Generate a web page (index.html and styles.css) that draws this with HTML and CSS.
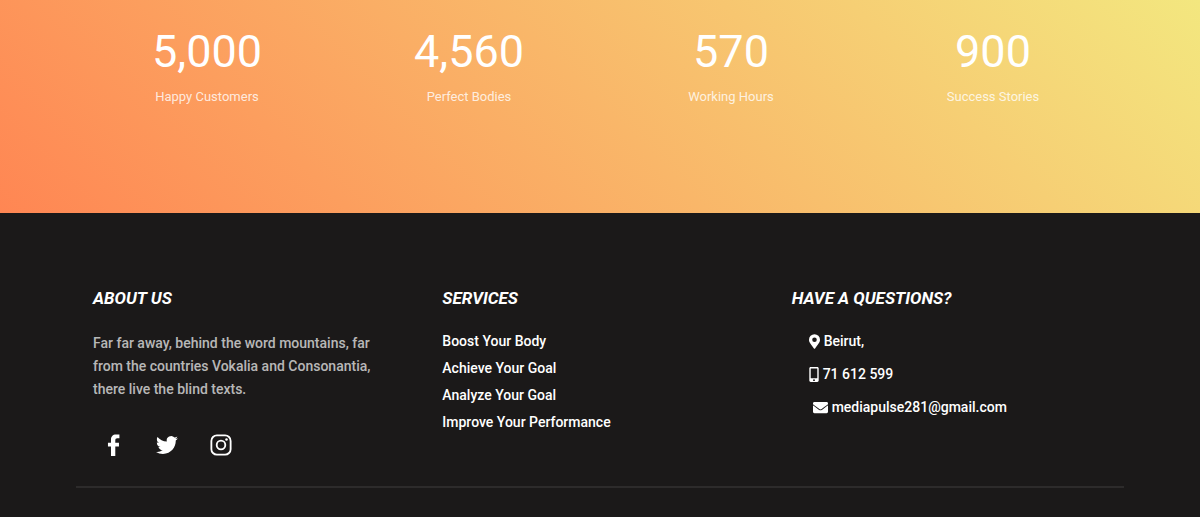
FILE: index.html
```html
<!DOCTYPE html>
<html lang="en">
<head>
    <meta charset="UTF-8">
    <meta name="viewport" content="width=device-width, initial-scale=1.0">
    <title>Gym</title>
    <link rel="stylesheet" href="styles.css">
</head>
<body>
    <section class="counter-section">
        <div class="container counters">
            <div class="counter">
                <strong class="number">5,000</strong>
                <span class="label">Happy Customers</span>
            </div>
            <div class="counter">
                <strong class="number">4,560</strong>
                <span class="label">Perfect Bodies</span>
            </div>
            <div class="counter">
                <strong class="number">570</strong>
                <span class="label">Working Hours</span>
            </div>
            <div class="counter">
                <strong class="number">900</strong>
                <span class="label">Success Stories</span>
            </div>
        </div>
    </section>

    <footer class="footer">
        <div class="container footer-row">
            <div class="footer-col">
                <h2>About Us</h2>
                <p class="about">Far far away, behind the word mountains, far from the countries Vokalia and Consonantia, there live the blind texts.</p>
                <ul class="social">
                    <li><a href="#" aria-label="Facebook">
                        <svg viewBox="0 0 24 24"><path d="M14.500 24V13.500h4V9.500h-4V7c0-1.600.7-2.400 2.200-2.400H19V.5h-3.600C11.600.5 9.800 2.700 9.800 6.200v3.300H6.500v4h3.300V24z"/></svg>
                    </a></li>
                    <li><a href="#" aria-label="Twitter">
                        <svg viewBox="0 0 24 24"><path d="M23.950 4.570a10 10 0 0 1-2.820.770 4.960 4.960 0 0 0 2.160-2.720c-.950.550-2 .960-3.130 1.180a4.920 4.920 0 0 0-8.380 4.480C7.690 8.090 4.070 6.130 1.640 3.160a4.820 4.820 0 0 0-.670 2.480c0 1.710.870 3.210 2.190 4.100a4.900 4.900 0 0 1-2.230-.620v.060a4.920 4.920 0 0 0 3.950 4.830 5 5 0 0 1-2.210.080 4.940 4.940 0 0 0 4.600 3.420A9.870 9.870 0 0 1 0 19.540a13.990 13.990 0 0 0 7.550 2.210c9.050 0 14-7.500 14-13.980 0-.210 0-.420-.020-.630a9.940 9.940 0 0 0 2.420-2.570z"/></svg>
                    </a></li>
                    <li><a href="#" aria-label="Instagram">
                        <svg viewBox="0 0 24 24"><rect class="line" x="1.500" y="1.500" width="21" height="21" rx="6"/><circle class="line" cx="12" cy="12" r="4.700"/><circle cx="18" cy="6" r="1.400"/></svg>
                    </a></li>
                </ul>
            </div>
            <div class="footer-col">
                <h2>Services</h2>
                <ul class="services">
                    <li><a href="#">Boost Your Body</a></li>
                    <li><a href="#">Achieve Your Goal</a></li>
                    <li><a href="#">Analyze Your Goal</a></li>
                    <li><a href="#">Improve Your Performance</a></li>
                </ul>
            </div>
            <div class="footer-col">
                <h2>Have a Questions?</h2>
                <ul class="contact">
                    <li>
                        <svg class="icon-pin" viewBox="0 0 384 512"><path fill-rule="evenodd" d="M172 502C27 291 0 270 0 192a192 192 0 0 1 384 0c0 78-27 99-172 310-10 13-30 13-40 0zM192 272a80 80 0 1 0 0-160 80 80 0 0 0 0 160z"/></svg>
                        <span>Beirut,</span>
                    </li>
                    <li>
                        <svg class="icon-phone" viewBox="0 0 320 512"><path fill-rule="evenodd" d="M272 0H48C21 0 0 21 0 48v416c0 27 21 48 48 48h224c27 0 48-21 48-48V48c0-27-21-48-48-48zM160 480a32 32 0 1 1 0-64 32 32 0 0 1 0 64zM272 372c0 7-5 12-12 12H60c-7 0-12-5-12-12V60c0-7 5-12 12-12h200c7 0 12 5 12 12z"/></svg>
                        <a href="#">71 612 599</a>
                    </li>
                    <li class="mail">
                        <svg class="icon-mail" viewBox="0 0 512 512"><path d="M502 191c4-3 10 0 10 5v204c0 27-21 48-48 48H48c-27 0-48-21-48-48V196c0-5 6-8 10-5 22 17 52 40 154 114 21 15 57 47 92 47 35 0 72-32 92-47 102-74 132-97 154-114zM256 320c23 0 57-29 73-41 133-96 143-105 174-129 6-4 9-11 9-19v-19c0-27-21-48-48-48H48c-27 0-48 21-48 48v19c0 8 3 14 9 19 31 24 41 33 174 129 16 12 50 41 73 41z"/></svg>
                        <a href="mailto:mediapulse281@gmail.com">mediapulse281@gmail.com</a>
                    </li>
                </ul>
            </div>
        </div>
    </footer>
</body>
</html>
```

FILE: styles.css
```css
* { box-sizing: border-box; }
body { margin: 0; background: #1b1919; color: #fff; font-family: Roboto, Arial, sans-serif; font-size: 14px; line-height: 23px; }
ul { list-style: none; margin: 0; padding: 0; }
a { color: inherit; text-decoration: none; }
svg { display: block; fill: #fff; }
.container { width: 88%; max-width: 1048px; margin: 0 auto; }

/* counters */
.counter-section { padding: 29px 0 105px; background: linear-gradient(45deg, #ff8653, #f3e77f); }
.counters { display: grid; grid-template-columns: repeat(4, 1fr); }
.counter { display: flex; flex-direction: column; gap: 10px; text-align: center; }
.number { font-size: 45px; font-weight: 400; line-height: 46px; }
.label { font-size: 13px; color: rgba(255, 255, 255, 0.8); }

/* footer */
.footer { padding: 71px 0 30px; font-weight: 500; }
.footer-row { display: grid; grid-template-columns: repeat(3, 1fr); border-bottom: 2px solid #2d2b2b; }
.footer-col { padding: 0 17px 30px; }
h2 { margin: 0 0 16px; font-size: 17px; line-height: 28px; font-style: italic; font-weight: 700; text-transform: uppercase; }
.about { margin: 20px 0 0; padding-right: 24px; color: rgba(255, 255, 255, 0.7); }
.social { display: flex; gap: 32px; margin-top: 33px; padding-left: 9px; }
.social svg { width: 22px; height: 22px; }
.social .line { fill: none; stroke: #fff; stroke-width: 2; }
.services li { line-height: 27px; }
.contact { display: flex; flex-direction: column; gap: 10px; padding: 2px 0 0 17px; }
.contact li { display: flex; align-items: center; gap: 4px; }
.contact .mail { padding-left: 4px; }
.icon-pin { width: 11px; height: 15px; }
.icon-phone { width: 10px; height: 15px; }
.icon-mail { width: 15px; height: 15px; }
```
